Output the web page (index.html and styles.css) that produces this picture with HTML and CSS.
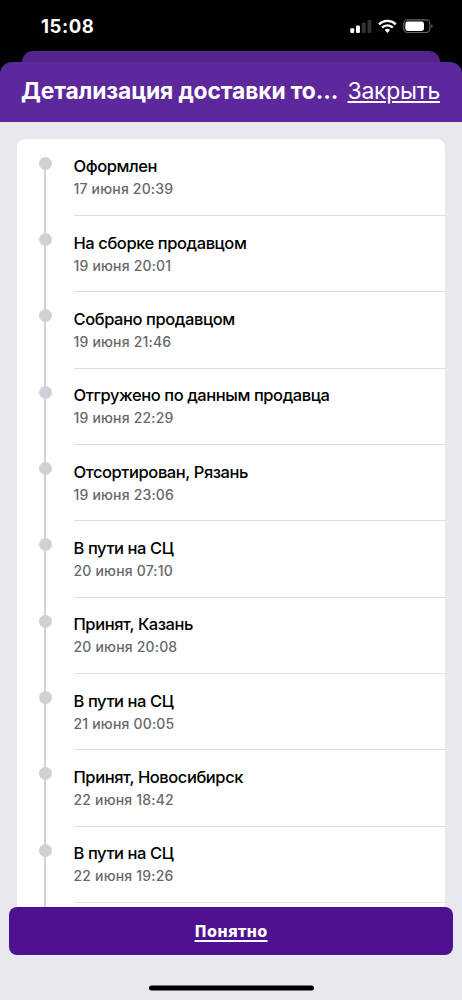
FILE: index.html
```html
<!DOCTYPE html>
<html lang="ru">
<head>
<meta charset="utf-8">
<title>Детализация доставки</title>
<link rel="stylesheet" href="styles.css">
</head>
<body>
<div class="screen">
  <div class="status">
    <span class="time">15:08</span>
    <svg class="status-icons" width="84" height="16" viewBox="0 0 84 16">
      <rect x="0.3" y="9.2" width="3.9" height="4.8" rx="1.1" fill="#fff"/>
      <rect x="6" y="6.5" width="3.9" height="7.5" rx="1.1" fill="#fff"/>
      <rect x="11.8" y="3.5" width="3.9" height="10.5" rx="1.1" fill="#333"/>
      <rect x="17.5" y="0.8" width="3.9" height="13.2" rx="1.1" fill="#333"/>
      <g fill="none" stroke="#fff" stroke-width="2.4">
        <path d="M29 5.3a12 12 0 0 1 16.8 0"/>
        <path d="M32 8.6a7.7 7.7 0 0 1 10.8 0"/>
      </g>
      <path d="M37.4 13.9l-2.7-2.8a3.9 3.9 0 0 1 5.4 0z" fill="#fff"/>
      <rect x="53.7" y="0.9" width="26.2" height="12.6" rx="4" fill="none" stroke="#666" stroke-width="1.1"/>
      <rect x="55.3" y="2.5" width="18.7" height="9.4" rx="2.4" fill="#fff"/>
      <path d="M81.3 5.2c1.8.7 1.8 3.3 0 4z" fill="#666"/>
    </svg>
  </div>
  <div class="back-sheet"></div>
  <header class="header">
    <h1 class="title">Детализация доставки то...</h1>
    <a class="close">Закрыть</a>
  </header>
  <main class="content">
    <ul class="card">
      <li class="row"><span class="dot"></span><div class="info"><b class="name">Оформлен</b><span class="date">17 июня 20:39</span></div></li>
      <li class="row"><span class="dot"></span><div class="info"><b class="name">На сборке продавцом</b><span class="date">19 июня 20:01</span></div></li>
      <li class="row"><span class="dot"></span><div class="info"><b class="name">Собрано продавцом</b><span class="date">19 июня 21:46</span></div></li>
      <li class="row"><span class="dot"></span><div class="info"><b class="name">Отгружено по данным продавца</b><span class="date">19 июня 22:29</span></div></li>
      <li class="row"><span class="dot"></span><div class="info"><b class="name">Отсортирован, Рязань</b><span class="date">19 июня 23:06</span></div></li>
      <li class="row"><span class="dot"></span><div class="info"><b class="name">В пути на СЦ</b><span class="date">20 июня 07:10</span></div></li>
      <li class="row"><span class="dot"></span><div class="info"><b class="name">Принят, Казань</b><span class="date">20 июня 20:08</span></div></li>
      <li class="row"><span class="dot"></span><div class="info"><b class="name">В пути на СЦ</b><span class="date">21 июня 00:05</span></div></li>
      <li class="row"><span class="dot"></span><div class="info"><b class="name">Принят, Новосибирск</b><span class="date">22 июня 18:42</span></div></li>
      <li class="row"><span class="dot"></span><div class="info"><b class="name">В пути на СЦ</b><span class="date">22 июня 19:26</span></div></li>
    </ul>
  </main>
  <footer class="footer">
    <a class="button">Понятно</a>
    <div class="home"></div>
  </footer>
</div>
</body>
</html>
```
FILE: styles.css
```css
* { box-sizing: border-box; }

body {
  margin: 0;
  background: #000;
  font-family: Inter, "Liberation Sans", sans-serif;
}

.screen {
  width: 462px;
  height: 1000px;
  display: flex;
  flex-direction: column;
  overflow: hidden;
}

.status {
  flex: none;
  height: 51px;
  padding: 0 28px 0 41px;
  display: flex;
  justify-content: space-between;
}

.time {
  margin-top: 15px;
  font-size: 18.5px;
  line-height: 22px;
  font-weight: 700;
  letter-spacing: 0.6px;
  color: #fff;
}

.status-icons { margin-top: 19px; }

.back-sheet {
  flex: none;
  height: 22px;
  margin: 0 22px -11.5px;
  border-radius: 11px 11px 0 0;
  background: #53248b;
}

.header {
  position: relative;
  flex: none;
  height: 60.5px;
  padding: 0 22px 2px;
  border-radius: 12px 12px 0 0;
  background: #5e289d;
  color: #fff;
  display: flex;
  align-items: center;
  justify-content: space-between;
}

.title {
  margin: 0 0 0 -1px;
  font-size: 22.8px;
  line-height: 28px;
  font-weight: 700;
  letter-spacing: -0.1px;
  white-space: nowrap;
}

.close {
  font-size: 23px;
  line-height: 28px;
  letter-spacing: -0.3px;
  text-decoration: underline;
  text-decoration-thickness: 2px;
  text-underline-offset: 2px;
}

.content {
  flex: 1;
  min-height: 0;
  padding: 17px 17px 0;
  background: #e9e8ee;
  overflow: hidden;
}

.card {
  height: 100%;
  margin: 0;
  padding: 0;
  list-style: none;
  border-radius: 8px 8px 0 0;
  background: linear-gradient(#d1d0d6, #d1d0d6) 27px 24px / 2px 100% no-repeat #fff;
}

.row {
  height: 76.35px;
  display: flex;
  gap: 22px;
  padding-left: 21.5px;
}

.row:first-child { height: 77px; }

.dot {
  flex: none;
  width: 13px;
  height: 13px;
  margin-top: 17.5px;
  border-radius: 50%;
  background: #d1d0d6;
}

.row + .row .dot { margin-top: 17px; }

.info {
  flex: 1;
  padding-top: 16px;
  border-bottom: 1px solid #dedee0;
  display: flex;
  flex-direction: column;
}

.row + .row .info { padding-top: 15.5px; }

.name {
  font-size: 16.5px;
  line-height: 23px;
  font-weight: 500;
  letter-spacing: -0.42px;
  color: #000;
}

.date {
  font-size: 14px;
  line-height: 22px;
  font-weight: 500;
  letter-spacing: 0.18px;
  color: #68686a;
}

.footer {
  flex: none;
  height: 93px;
  padding: 0 9px;
  background: linear-gradient(90deg, #e9e8ee 17px, #fff 17px 445px, #e9e8ee 445px) 0 0 / 100% 8px no-repeat #e9e8ee;
}

.button {
  height: 47.5px;
  border-radius: 8px;
  background: #4e1190;
  color: #fff;
  display: flex;
  align-items: center;
  justify-content: center;
  font-family: "Noto Sans", sans-serif;
  font-size: 16px;
  font-weight: 800;
  letter-spacing: 0.2px;
  text-decoration: underline;
  text-decoration-thickness: 1.5px;
  text-underline-offset: 2.5px;
}

.home {
  width: 165px;
  height: 5px;
  margin: 31.5px auto 0;
  transform: translateY(-0.5px);
  border-radius: 3px;
  background: #000;
}
```
